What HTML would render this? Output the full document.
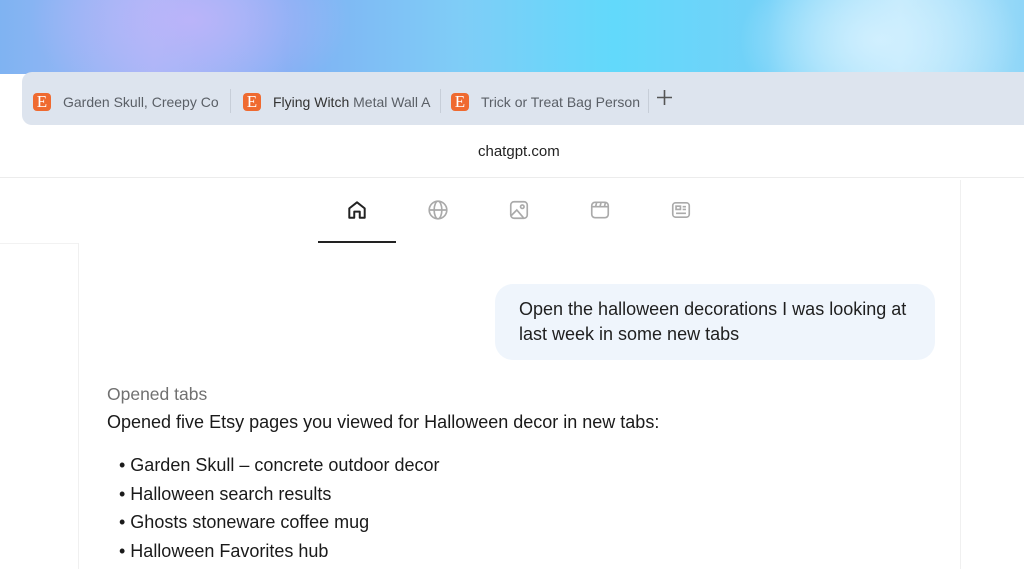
<!DOCTYPE html>
<html><head><meta charset="utf-8"><style>
*{margin:0;padding:0;box-sizing:border-box}
html,body{width:1024px;height:569px;overflow:hidden}
body{background:#fff;font-family:"Liberation Sans",sans-serif;position:relative}
.grad{position:absolute;left:0;top:0;width:1024px;height:74px;
background:
radial-gradient(ellipse 160px 90px at 190px 20px,rgba(190,180,250,0.9),transparent),
radial-gradient(ellipse 140px 90px at 880px 40px,rgba(210,240,255,0.95),transparent),
linear-gradient(90deg,#7fb3f2 0%,#a6b8f6 15%,#7fb0f3 28%,#7fcdf7 45%,#62d9fb 60%,#73d1f8 75%,#bfe8fb 88%,#8fd6f8 100%)}
.strip{position:absolute;left:22px;top:72px;width:1002px;height:53px;background:#dde4ee;border-radius:10px 0 0 10px}
.act{position:absolute;left:0;top:75px;width:22px;height:55px;background:#fff;border-radius:0 8px 0 0}
.tab{position:absolute;top:92px;height:20px;display:flex;align-items:center;font-size:14px;color:#5a5f66;white-space:nowrap}
.e{width:18px;height:18px;background:#ef6a30;border-radius:4px;color:#fff;font-family:"Liberation Serif",serif;font-size:17px;line-height:18px;text-align:center;margin-right:12px}
.sep{position:absolute;top:89px;width:1px;height:24px;background:#c7ced8}
.addr{position:absolute;left:0;top:125px;width:1024px;height:53px;background:#fff;border-bottom:1px solid #ececec;font-size:15px;color:#222;line-height:53px}
.vl{position:absolute;top:180px;width:1px;height:389px;background:#f0f0f0}
.nav svg{position:absolute;top:199px}
.ul{position:absolute;left:318px;top:241px;width:78px;height:2px;background:#222}
.bub{position:absolute;left:495px;top:284px;width:440px;height:76px;background:#eff5fc;border-radius:18px;padding:13px 0 0 24px;font-size:18px;line-height:25px;color:#1f1f1f}
.t{position:absolute;left:107px;font-size:18px;color:#1a1a1a;white-space:nowrap}
</style></head><body>
<div class="grad"></div>
<div class="strip"></div>
<div class="act"></div>
<div class="tab" style="left:33px"><div class="e">E</div>Garden Skull, Creepy Co</div>
<div class="sep" style="left:230px"></div>
<div class="tab" style="left:243px"><div class="e">E</div><span style="color:#333">Flying Witch</span>&nbsp;Metal Wall A</div>
<div class="sep" style="left:440px"></div>
<div class="tab" style="left:451px"><div class="e">E</div>Trick or Treat Bag Person</div>
<div class="sep" style="left:648px"></div>
<svg style="position:absolute;left:656px;top:89px" width="17" height="17" viewBox="0 0 17 17" stroke="#555" stroke-width="1.6"><path d="M8.5 1v15M1 8.5h15"/></svg>
<div class="addr"><span style="position:absolute;left:478px">chatgpt.com</span></div>
<div class="vl" style="left:78px;top:243px;height:326px"></div>
<div class="vl" style="left:960px"></div>
<div style="position:absolute;left:0;top:243px;width:78px;height:1px;background:#f2f2f2"></div>
<div class="nav">
<svg style="left:346px" width="22" height="22" viewBox="0 0 20 20" fill="none" stroke="#222" stroke-width="1.8" stroke-linejoin="round"><path d="M3 17V8.5L10 3l7 5.5V17h-4.5v-5.5h-5V17z"/></svg>
<svg style="left:427px" width="22" height="22" viewBox="0 0 20 20" fill="none" stroke="#aaa" stroke-width="1.5"><circle cx="10" cy="10" r="8"/><ellipse cx="10" cy="10" rx="3.5" ry="8"/><path d="M2 10h16"/></svg>
<svg style="left:508px" width="22" height="22" viewBox="0 0 20 20" fill="none" stroke="#aaa" stroke-width="1.5"><rect x="2.5" y="2.5" width="15" height="15" rx="3"/><circle cx="13" cy="7" r="1.6"/><path d="M3 15l5-5 6 7"/></svg>
<svg style="left:589px" width="22" height="22" viewBox="0 0 20 20" fill="none" stroke="#aaa" stroke-width="1.5"><rect x="2.5" y="3" width="15" height="14" rx="3"/><path d="M2.5 7h15M7 3l-1 4M11 3l-1 4M15 3l-1 4"/></svg>
<svg style="left:670px" width="22" height="22" viewBox="0 0 20 20" fill="none" stroke="#aaa" stroke-width="1.5"><rect x="2.5" y="3.5" width="15" height="13" rx="2.5"/><rect x="5.5" y="6.5" width="4" height="3"/><path d="M11.5 7h3M11.5 9.5h3M5.5 13h9"/></svg>
</div>
<div class="ul"></div>
<div class="bub">Open the halloween decorations I was looking at<br>last week in some new tabs</div>
<div class="t" style="top:384px;color:#707070;font-size:17.5px">Opened tabs</div>
<div class="t" style="top:412px">Opened five Etsy pages you viewed for Halloween decor in new tabs:</div>
<div class="t" style="top:455px;left:119px">• Garden Skull – concrete outdoor decor</div>
<div class="t" style="top:484px;left:119px">• Halloween search results</div>
<div class="t" style="top:512px;left:119px">• Ghosts stoneware coffee mug</div>
<div class="t" style="top:541px;left:119px">• Halloween Favorites hub</div>
</body></html>
